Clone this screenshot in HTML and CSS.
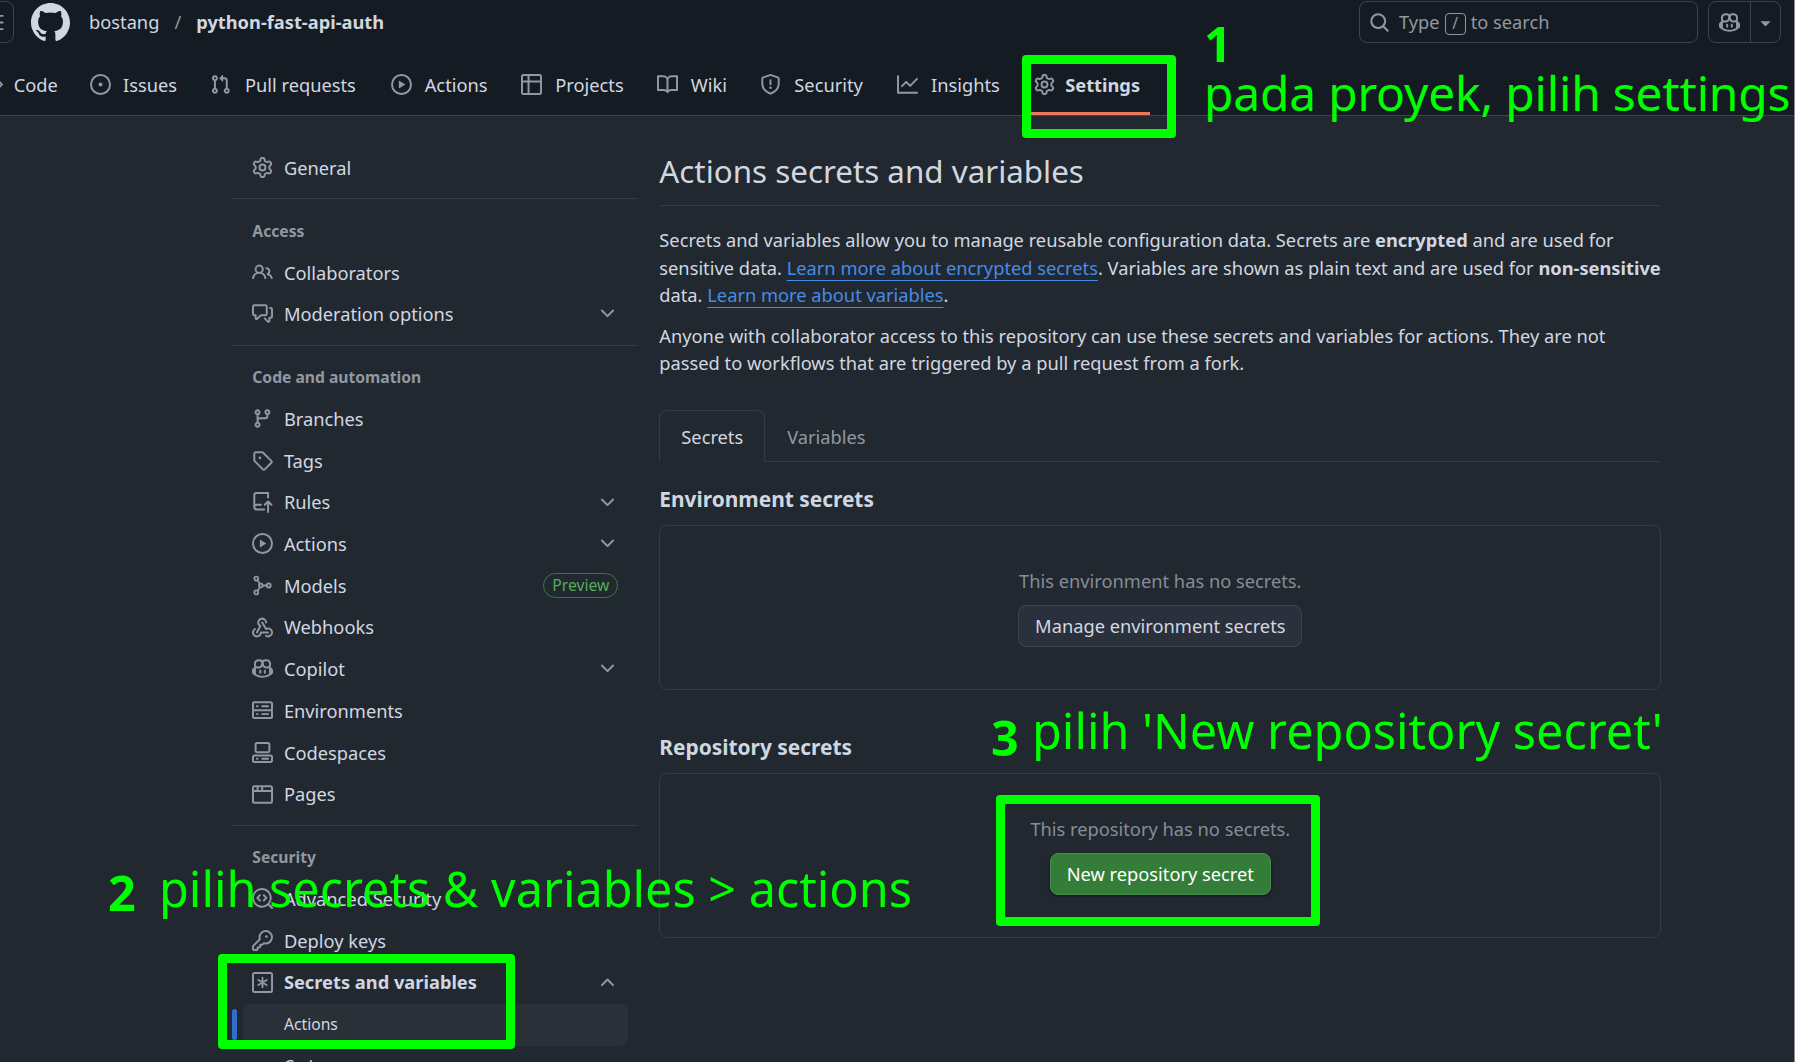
FILE: index.html
```
<!DOCTYPE html>
<html lang="en">
<head>
<meta charset="utf-8">
<title>Actions secrets and variables</title>
<link rel="stylesheet" href="styles.css">
</head>
<body>
<svg class="sprite" aria-hidden="true">
  <symbol id="gear" viewBox="0 0 16 16"><path d="M8 0a8.2 8.2 0 0 1 .701.031C9.444.095 9.99.645 10.16 1.29l.288 1.107c.018.066.079.158.212.224.231.114.454.243.668.386.123.082.233.09.299.071l1.103-.303c.644-.176 1.392.021 1.82.63.27.385.506.792.704 1.218.315.675.111 1.422-.364 1.891l-.814.806c-.049.048-.098.147-.088.294.016.257.016.515 0 .772-.01.147.038.246.088.294l.814.806c.475.469.679 1.216.364 1.891a7.977 7.977 0 0 1-.704 1.217c-.428.61-1.176.807-1.82.63l-1.102-.302c-.067-.019-.177-.011-.3.071a5.909 5.909 0 0 1-.668.386c-.133.066-.194.158-.211.224l-.29 1.106c-.168.646-.715 1.196-1.458 1.26a8.006 8.006 0 0 1-1.402 0c-.743-.064-1.289-.614-1.458-1.26l-.289-1.106c-.018-.066-.079-.158-.212-.224a5.738 5.738 0 0 1-.668-.386c-.123-.082-.233-.09-.299-.071l-1.103.303c-.644.176-1.392-.021-1.82-.63a8.12 8.12 0 0 1-.704-1.218c-.315-.675-.111-1.422.363-1.891l.815-.806c.05-.048.098-.147.088-.294a6.214 6.214 0 0 1 0-.772c.01-.147-.038-.246-.088-.294l-.815-.806C.635 6.045.431 5.298.746 4.623a7.92 7.92 0 0 1 .704-1.217c.428-.61 1.176-.807 1.82-.63l1.102.302c.067.019.177.011.3-.071.214-.143.437-.272.668-.386.133-.066.194-.158.211-.224l.29-1.106C6.009.645 6.556.095 7.299.03 7.53.01 7.764 0 8 0Zm-.571 1.525c-.036.003-.108.036-.137.146l-.289 1.105c-.147.561-.549.967-.998 1.189-.173.086-.34.183-.5.29-.417.278-.97.423-1.529.27l-1.103-.303c-.109-.03-.175.016-.195.045-.22.312-.412.644-.573.99-.014.031-.021.11.059.19l.815.806c.411.406.562.957.53 1.456a4.709 4.709 0 0 0 0 .582c.032.499-.119 1.05-.53 1.456l-.815.806c-.081.08-.073.159-.059.19.162.346.353.677.573.989.02.03.085.076.195.046l1.102-.303c.56-.153 1.113-.008 1.53.27.161.107.328.204.501.29.447.222.85.629.997 1.189l.289 1.105c.029.109.101.143.137.146a6.6 6.6 0 0 0 1.142 0c.036-.003.108-.036.137-.146l.289-1.105c.147-.561.549-.967.998-1.189.173-.086.34-.183.5-.29.417-.278.97-.423 1.529-.27l1.103.303c.109.029.175-.016.195-.045.22-.313.411-.644.573-.99.014-.031.021-.11-.059-.19l-.815-.806c-.411-.406-.562-.957-.53-1.456a4.709 4.709 0 0 0 0-.582c-.032-.499.119-1.05.53-1.456l.815-.806c.081-.08.073-.159.059-.19a6.464 6.464 0 0 0-.573-.989c-.02-.03-.085-.076-.195-.046l-1.102.303c-.56.153-1.113.008-1.53-.27a4.44 4.44 0 0 0-.501-.29c-.447-.222-.85-.629-.997-1.189l-.289-1.105c-.029-.11-.101-.143-.137-.146a6.6 6.6 0 0 0-1.142 0ZM11 8a3 3 0 1 1-6 0 3 3 0 0 1 6 0ZM9.5 8a1.5 1.5 0 1 0-3.001.001A1.5 1.5 0 0 0 9.5 8Z"/></symbol>
  <symbol id="people" viewBox="0 0 16 16"><path d="M2 5.5a3.5 3.5 0 1 1 5.898 2.549 5.508 5.508 0 0 1 3.034 4.084.75.75 0 1 1-1.482.235 4 4 0 0 0-7.9 0 .75.75 0 0 1-1.482-.236A5.507 5.507 0 0 1 3.102 8.05 3.493 3.493 0 0 1 2 5.5ZM11 4a3.001 3.001 0 0 1 2.22 5.018 5.01 5.01 0 0 1 2.56 3.012.749.749 0 0 1-.885.954.752.752 0 0 1-.549-.514 3.507 3.507 0 0 0-2.522-2.372.75.75 0 0 1-.574-.73v-.352a.75.75 0 0 1 .416-.672A1.5 1.5 0 0 0 11 5.5.75.75 0 0 1 11 4Zm-5.5-.5a2 2 0 1 0-.001 3.999A2 2 0 0 0 5.5 3.5Z"/></symbol>
  <symbol id="discuss" viewBox="0 0 16 16"><path d="M1.75 1h8.5c.966 0 1.75.784 1.75 1.75v5.5A1.75 1.75 0 0 1 10.25 10H7.061l-2.574 2.573A1.458 1.458 0 0 1 2 11.543V10h-.25A1.75 1.75 0 0 1 0 8.25v-5.5C0 1.784.784 1 1.75 1ZM1.5 2.75v5.5c0 .138.112.25.25.25h1a.75.75 0 0 1 .75.75v2.19l2.72-2.72a.749.749 0 0 1 .53-.22h3.5a.25.25 0 0 0 .25-.25v-5.5a.25.25 0 0 0-.25-.25h-8.5a.25.25 0 0 0-.25.25Zm13 2a.25.25 0 0 0-.25-.25h-.5a.75.75 0 0 1 0-1.5h.5c.966 0 1.75.784 1.75 1.75v5.5A1.75 1.75 0 0 1 14.25 12H14v1.543a1.458 1.458 0 0 1-2.487 1.03L9.22 12.28a.749.749 0 1 1 1.06-1.06l2.22 2.22v-2.19a.75.75 0 0 1 .75-.75h1a.25.25 0 0 0 .25-.25Z"/></symbol>
  <symbol id="branch" viewBox="0 0 16 16"><path d="M9.5 3.25a2.25 2.25 0 1 1 3 2.122V6A2.5 2.5 0 0 1 10 8.5H6a1 1 0 0 0-1 1v1.128a2.251 2.251 0 1 1-1.5 0V5.372a2.25 2.25 0 1 1 1.5 0v1.836A2.493 2.493 0 0 1 6 7h4a1 1 0 0 0 1-1v-.628A2.25 2.25 0 0 1 9.5 3.25Zm-6 0a.75.75 0 1 0 1.5 0 .75.75 0 0 0-1.5 0Zm8.25-.75a.75.75 0 1 0 0 1.5.75.75 0 0 0 0-1.5ZM4.25 12a.75.75 0 1 0 0 1.5.75.75 0 0 0 0-1.5Z"/></symbol>
  <symbol id="tag" viewBox="0 0 16 16"><path d="M1 7.775V2.75C1 1.784 1.784 1 2.75 1h5.025c.464 0 .91.184 1.238.513l6.25 6.25a1.75 1.75 0 0 1 0 2.474l-5.026 5.026a1.75 1.75 0 0 1-2.474 0l-6.25-6.25A1.752 1.752 0 0 1 1 7.775Zm1.5 0c0 .066.026.13.073.177l6.25 6.25a.25.25 0 0 0 .354 0l5.025-5.025a.25.25 0 0 0 0-.354l-6.25-6.25a.25.25 0 0 0-.177-.073H2.75a.25.25 0 0 0-.25.25ZM6 5a1 1 0 1 1 0 2 1 1 0 0 1 0-2Z"/></symbol>
  <symbol id="rules" viewBox="0 0 16 16"><path d="M1 2.5A2.5 2.5 0 0 1 3.5 0h8.75a.75.75 0 0 1 .75.75v3.5a.75.75 0 0 1-1.5 0V1.5h-8a1 1 0 0 0-1 1v6.708A2.493 2.493 0 0 1 3.5 9h3.25a.75.75 0 0 1 0 1.5H3.5a1 1 0 0 0 0 2h5.75a.75.75 0 0 1 0 1.500H3.500A2.500 2.500 0 0 1 1 11.500Zm13.230 7.790-1.230-1.224v6.184a.75.75 0 0 1-1.500 0V9.066L10.270 10.290a.75.75 0 0 1-1.060-1.060l2.505-2.504a.75.75 0 0 1 1.060 0l2.515 2.500a.75.75 0 0 1-1.060 1.064Z"/></symbol>
  <symbol id="play" viewBox="0 0 16 16"><path d="M8 0a8 8 0 1 1 0 16A8 8 0 0 1 8 0ZM1.500 8a6.500 6.500 0 1 0 13 0 6.500 6.500 0 0 0-13 0Zm4.879-2.773 4.264 2.559a.25.25 0 0 1 0 .428l-4.264 2.559A.25.25 0 0 1 6 10.559V5.442a.25.25 0 0 1 .379-.215Z"/></symbol>
  <symbol id="models" viewBox="0 0 16 16"><g class="line"><circle cx="3.250" cy="2.750" r="1.500"/><circle cx="3.250" cy="13.250" r="1.500"/><circle cx="6.750" cy="8" r="1.400"/><circle cx="12.750" cy="8" r="1.500"/><path d="M4.200 4 6 6.700M4.200 12 6 9.300M8.200 8h3"/></g></symbol>
  <symbol id="webhook" viewBox="0 0 16 16"><path d="M5.500 4.250a2.250 2.250 0 0 1 4.500 0 .75.75 0 0 0 1.500 0 3.750 3.750 0 1 0-6.140 2.889l-2.272 4.258a.75.75 0 0 0 1.324.706L7 7.250a.75.75 0 0 0-.309-1.015A2.250 2.250 0 0 1 5.500 4.250Z"/><path d="M7.364 3.607a.75.75 0 0 1 1.030.257l2.608 4.349a3.750 3.750 0 1 1-.628 6.785.75.75 0 0 1 .752-1.299 2.250 2.250 0 1 0-.033-3.880.75.75 0 0 1-1.030-.256L7.107 4.636a.75.75 0 0 1 .257-1.029Z"/><path d="M2.900 8.776A.75.75 0 0 1 2.625 9.800 2.250 2.250 0 1 0 6 11.750a.75.75 0 0 1 .75-.751h5.500a.75.75 0 0 1 0 1.500H7.425a3.751 3.751 0 1 1-5.550-3.998.75.75 0 0 1 1.025.275Z"/></symbol>
  <symbol id="copilot" viewBox="0 0 16 16"><path d="M7.998 15.035c-4.562 0-7.873-2.914-7.998-3.749V9.338c.085-.628.677-1.686 1.588-2.065.013-.07.024-.143.036-.218.029-.183.060-.384.126-.612-.201-.508-.254-1.084-.254-1.656 0-.870.128-1.769.693-2.484.579-.733 1.494-1.124 2.724-1.261 1.206-.134 2.262.034 2.944.765.050.053.096.108.139.165.044-.057.094-.112.143-.165.682-.731 1.738-.899 2.944-.765 1.230.137 2.145.528 2.724 1.261.566.715.693 1.614.693 2.484 0 .572-.053 1.148-.254 1.656.066.228.098.429.126.612.012.076.024.148.037.218.924.385 1.522 1.471 1.591 2.095v1.872c0 .766-3.351 3.795-8.002 3.795Zm0-1.485c2.280 0 4.584-1.110 5.002-1.433V7.862l-.023-.116c-.490.210-1.075.291-1.727.291-1.146 0-2.059-.327-2.710-.991A3.222 3.222 0 0 1 8 6.303a3.240 3.240 0 0 1-.544.743c-.650.664-1.563.991-2.710.991-.652 0-1.236-.081-1.727-.291l-.023.116v4.255c.419.323 2.722 1.433 5.002 1.433ZM6.762 2.830c-.193-.206-.637-.413-1.682-.297-1.019.113-1.479.404-1.713.700-.247.312-.369.789-.369 1.554 0 .793.129 1.171.308 1.371.162.181.519.379 1.442.379.853 0 1.339-.235 1.638-.540.315-.322.527-.827.617-1.553.117-.935-.037-1.395-.241-1.614Zm4.155-.297c-1.044-.116-1.488.091-1.681.297-.204.219-.359.679-.242 1.614.091.726.303 1.231.618 1.553.299.305.784.540 1.638.540.922 0 1.280-.198 1.442-.379.179-.200.308-.578.308-1.371 0-.765-.123-1.242-.370-1.554-.233-.296-.693-.587-1.713-.700Z"/><path d="M6.250 9.037a.75.75 0 0 1 .75.75v1.501a.75.75 0 0 1-1.500 0V9.787a.75.75 0 0 1 .75-.75Zm4.250.75v1.501a.75.75 0 0 1-1.500 0V9.787a.75.75 0 0 1 1.500 0Z"/></symbol>
  <symbol id="server" viewBox="0 0 16 16"><path d="M1.750 1h12.500c.966 0 1.750.784 1.750 1.750v4c0 .372-.116.717-.314 1 .198.283.314.628.314 1v4a1.750 1.750 0 0 1-1.750 1.750H1.750A1.750 1.750 0 0 1 0 12.750v-4c0-.358.109-.707.314-1a1.739 1.739 0 0 1-.314-1v-4C0 1.784.784 1 1.750 1ZM1.500 2.750v4c0 .138.112.250.250.250h12.500a.250.250 0 0 0 .250-.250v-4a.250.250 0 0 0-.250-.250H1.750a.250.250 0 0 0-.250.250Zm.250 5.750a.250.250 0 0 0-.250.250v4c0 .138.112.250.250.250h12.500a.250.250 0 0 0 .250-.250v-4a.250.250 0 0 0-.250-.250ZM7 4.750A.75.75 0 0 1 7.750 4h4.500a.75.75 0 0 1 0 1.500h-4.500A.75.75 0 0 1 7 4.750ZM7.750 10h4.500a.75.75 0 0 1 0 1.500h-4.500a.75.75 0 0 1 0-1.500ZM3 4.750A.75.75 0 0 1 3.750 4h.5a.75.75 0 0 1 0 1.500h-.5A.75.75 0 0 1 3 4.750ZM3.750 10h.5a.75.75 0 0 1 0 1.500h-.5a.75.75 0 0 1 0-1.500Z"/></symbol>
  <symbol id="codespaces" viewBox="0 0 16 16"><path d="M0 11.250c0-.966.784-1.750 1.750-1.750h12.500c.966 0 1.750.784 1.750 1.750v3A1.750 1.750 0 0 1 14.250 16H1.750A1.750 1.750 0 0 1 0 14.250Zm2-9.500C2 .784 2.784 0 3.750 0h8.500C13.216 0 14 .784 14 1.750v5a1.750 1.750 0 0 1-1.750 1.750h-8.500A1.750 1.750 0 0 1 2 6.750Zm1.750-.250a.250.250 0 0 0-.250.250v5c0 .138.112.250.250.250h8.500a.250.250 0 0 0 .250-.250v-5a.250.250 0 0 0-.250-.250Zm-2 9.500a.250.250 0 0 0-.250.250v3c0 .138.112.250.250.250h12.500a.250.250 0 0 0 .250-.250v-3a.250.250 0 0 0-.250-.250Z"/><path d="M7 12.750a.75.75 0 0 1 .75-.75h4.500a.75.75 0 0 1 0 1.500h-4.500a.75.75 0 0 1-.75-.75Zm-4 0a.75.75 0 0 1 .75-.75h.5a.75.75 0 0 1 0 1.500h-.5a.75.75 0 0 1-.75-.75Z"/></symbol>
  <symbol id="browser" viewBox="0 0 16 16"><path d="M0 2.750C0 1.784.784 1 1.750 1h12.500c.966 0 1.750.784 1.750 1.750v10.500A1.750 1.750 0 0 1 14.250 15H1.750A1.750 1.750 0 0 1 0 13.250ZM14.500 6h-13v7.250c0 .138.112.250.250.250h12.500a.250.250 0 0 0 .250-.250Zm-6-3.500v2h6V2.750a.250.250 0 0 0-.250-.250ZM5 2.500v2h2v-2Zm-3.250 0a.250.250 0 0 0-.250.250V4.500h2v-2Z"/></symbol>
  <symbol id="codescan" viewBox="0 0 16 16"><path d="M8.470 4.970a.75.75 0 0 0 0 1.060L9.940 7.500 8.470 8.970a.75.75 0 1 0 1.060 1.060l2-2a.75.75 0 0 0 0-1.060l-2-2a.75.75 0 0 0-1.060 0ZM6.530 6.030a.75.75 0 0 0-1.060-1.060l-2 2a.75.75 0 0 0 0 1.060l2 2a.75.75 0 1 0 1.060-1.060L5.060 7.500Z"/><path d="M12.246 13.307a7.500 7.500 0 1 1 1.060-1.060l2.474 2.473a.75.75 0 1 1-1.060 1.060ZM1.500 7.500a6.002 6.002 0 0 0 3.608 5.504 6.002 6.002 0 0 0 6.486-1.117.750.750 0 0 1 .292-.293A6 6 0 1 0 1.500 7.500Z"/></symbol>
  <symbol id="key" viewBox="0 0 16 16"><path d="M10.500 0a5.499 5.499 0 1 1-1.288 10.848l-.932.932a.749.749 0 0 1-.530.220H7v.750a.749.749 0 0 1-.220.530l-.5.500a.749.749 0 0 1-.530.220H5v.750a.749.749 0 0 1-.220.530l-.5.500a.749.749 0 0 1-.530.220h-2A1.750 1.750 0 0 1 0 14.250v-2c0-.199.079-.389.220-.530l4.932-4.932A5.500 5.500 0 0 1 10.500 0Zm-4 5.500c-.001.431.069.860.205 1.269a.75.75 0 0 1-.181.768L1.500 12.560v1.690c0 .138.112.250.250.250h1.690l.060-.060v-1.190a.75.75 0 0 1 .75-.75h1.190l.060-.060v-1.190a.75.75 0 0 1 .75-.75h1.190l1.023-1.025a.75.75 0 0 1 .768-.180A4 4 0 1 0 6.500 5.500ZM11 6a1 1 0 1 1 0-2 1 1 0 0 1 0 2Z"/></symbol>
  <symbol id="asterisk" viewBox="0 0 16 16"><path d="M1.750 0h12.500C15.216 0 16 .784 16 1.750v12.500A1.750 1.750 0 0 1 14.250 16H1.750A1.750 1.750 0 0 1 0 14.250V1.750C0 .784.784 0 1.750 0ZM1.500 1.750v12.500c0 .138.112.250.250.250h12.500a.250.250 0 0 0 .250-.250V1.750a.250.250 0 0 0-.250-.250H1.750a.250.250 0 0 0-.250.250Z"/><path class="line" d="M8 4.300v7.400M4.800 6.150l6.400 3.700M11.200 6.150 4.800 9.850"/></symbol>
  <symbol id="issue" viewBox="0 0 16 16"><path d="M8 9.500a1.500 1.500 0 1 0 0-3 1.500 1.500 0 0 0 0 3Z"/><path d="M8 0a8 8 0 1 1 0 16A8 8 0 0 1 8 0ZM1.500 8a6.500 6.500 0 1 0 13 0 6.500 6.500 0 0 0-13 0Z"/></symbol>
  <symbol id="pull" viewBox="0 0 16 16"><path d="M1.500 3.250a2.250 2.250 0 1 1 3 2.122v5.256a2.251 2.251 0 1 1-1.500 0V5.372A2.250 2.250 0 0 1 1.500 3.250Zm5.677-.177L9.573.677A.250.250 0 0 1 10 .854V2.500h1A2.500 2.500 0 0 1 13.500 5v5.628a2.251 2.251 0 1 1-1.500 0V5a1 1 0 0 0-1-1h-1v1.646a.250.250 0 0 1-.427.177L7.177 3.427a.250.250 0 0 1 0-.354ZM3.750 2.500a.75.75 0 1 0 0 1.500.75.75 0 0 0 0-1.500Zm0 9.500a.75.75 0 1 0 0 1.500.75.75 0 0 0 0-1.500Zm8.250.750a.75.75 0 1 0 1.500 0 .75.75 0 0 0-1.500 0Z"/></symbol>
  <symbol id="table" viewBox="0 0 16 16"><path d="M0 1.750C0 .784.784 0 1.750 0h12.500C15.216 0 16 .784 16 1.750v12.500A1.750 1.750 0 0 1 14.250 16H1.750A1.750 1.750 0 0 1 0 14.250ZM6.500 6.500v8h7.750a.250.250 0 0 0 .250-.250V6.500Zm8-1.500V1.750a.250.250 0 0 0-.250-.250H6.500V5Zm-13 1.500v7.750c0 .138.112.250.250.250H5v-8ZM5 5V1.500H1.750a.250.250 0 0 0-.250.250V5Z"/></symbol>
  <symbol id="book" viewBox="0 0 16 16"><path d="M0 1.750A.75.75 0 0 1 .750 1h4.253c1.227 0 2.317.590 3 1.501A3.743 3.743 0 0 1 11.006 1h4.245a.75.75 0 0 1 .75.75v10.500a.75.75 0 0 1-.75.75h-4.507a2.250 2.250 0 0 0-1.591.659l-.622.621a.75.75 0 0 1-1.060 0l-.622-.621A2.250 2.250 0 0 0 5.258 13H.750a.75.75 0 0 1-.75-.75Zm7.251 10.324.004-5.073-.002-2.253A2.250 2.250 0 0 0 5.003 2.500H1.500v9h3.757a3.750 3.750 0 0 1 1.994.574ZM8.755 4.750l-.004 7.322a3.752 3.752 0 0 1 1.992-.572H14.500v-9h-3.495a2.250 2.250 0 0 0-2.250 2.250Z"/></symbol>
  <symbol id="shield" viewBox="0 0 16 16"><path d="M7.467.133a1.748 1.748 0 0 1 1.066 0l5.250 1.680A1.750 1.750 0 0 1 15 3.480V7c0 1.566-.320 3.182-1.303 4.682-.983 1.498-2.585 2.813-5.032 3.855a1.697 1.697 0 0 1-1.330 0c-2.447-1.042-4.049-2.357-5.032-3.855C1.320 10.182 1 8.566 1 7V3.480a1.755 1.755 0 0 1 1.217-1.667Zm.610 1.429a.250.250 0 0 0-.153 0l-5.250 1.680a.250.250 0 0 0-.174.238V7c0 1.358.275 2.666 1.057 3.860.784 1.194 2.121 2.340 4.366 3.297a.196.196 0 0 0 .154 0c2.245-.956 3.582-2.104 4.366-3.298C13.225 9.666 13.500 8.360 13.500 7V3.480a.251.251 0 0 0-.174-.237l-5.250-1.680ZM8.750 4.750v3a.75.75 0 0 1-1.500 0v-3a.75.75 0 0 1 1.500 0ZM9 10.500a1 1 0 1 1-2 0 1 1 0 0 1 2 0Z"/></symbol>
  <symbol id="graph" viewBox="0 0 16 16"><path d="M1.500 1.750V13.500h13.750a.75.75 0 0 1 0 1.500H.750a.75.75 0 0 1-.75-.75V1.750a.75.75 0 0 1 1.500 0Zm14.280 2.530-5.250 5.250a.75.75 0 0 1-1.060 0L7 7.060 4.280 9.780a.751.751 0 0 1-1.060-1.060l3.250-3.250a.75.75 0 0 1 1.060 0L10 7.940l4.720-4.720a.751.751 0 0 1 1.060 1.060Z"/></symbol>
  <symbol id="search" viewBox="0 0 16 16"><path d="M10.680 11.740a6 6 0 0 1-7.922-8.982 6 6 0 0 1 8.982 7.922l3.040 3.040a.749.749 0 1 1-1.060 1.060ZM11.500 7a4.499 4.499 0 1 0-8.997 0A4.499 4.499 0 0 0 11.500 7Z"/></symbol>
  <symbol id="down" viewBox="0 0 16 16"><path d="M12.780 5.220a.749.749 0 0 1 0 1.060l-4.250 4.250a.749.749 0 0 1-1.060 0L3.220 6.280a.749.749 0 1 1 1.060-1.060L8 8.939l3.720-3.719a.749.749 0 0 1 1.060 0Z"/></symbol>
  <symbol id="up" viewBox="0 0 16 16"><path d="M3.220 10.530a.749.749 0 0 1 0-1.060l4.250-4.250a.749.749 0 0 1 1.060 0l4.250 4.250a.749.749 0 1 1-1.060 1.060L8 6.811 4.280 10.530a.749.749 0 0 1-1.060 0Z"/></symbol>
  <symbol id="triangle" viewBox="0 0 16 16"><path d="m4.427 7.427 3.396 3.396a.250.250 0 0 0 .354 0l3.396-3.396A.250.250 0 0 0 11.396 7H4.604a.250.250 0 0 0-.177.427Z"/></symbol>
  <symbol id="menu" viewBox="0 0 16 16"><path class="line" d="M1 3h14M1 8h14M1 13h14"/></symbol>
  <symbol id="code" viewBox="0 0 16 16"><path class="line" d="m5 3.500-4.200 4.500L5 12.500M11 3.500l4.200 4.500-4.200 4.500"/></symbol>
  <symbol id="mark" viewBox="0 0 16 16"><path d="M8 0c4.420 0 8 3.580 8 8a8.013 8.013 0 0 1-5.450 7.590c-.400.080-.550-.170-.550-.380 0-.270.010-1.130.010-2.200 0-.750-.250-1.230-.540-1.480 1.780-.200 3.650-.880 3.650-3.950 0-.880-.310-1.590-.820-2.150.080-.200.360-1.020-.080-2.120 0 0-.670-.220-2.200.820-.640-.180-1.320-.270-2-.270-.680 0-1.360.090-2 .270-1.530-1.030-2.200-.820-2.200-.820-.440 1.100-.160 1.920-.080 2.120-.510.560-.820 1.280-.820 2.150 0 3.060 1.860 3.750 3.640 3.950-.230.200-.440.550-.510 1.070-.460.210-1.610.550-2.330-.660-.150-.240-.600-.830-1.230-.820-.670.010-.270.380.010.530.340.190.730.900.820 1.130.160.450.680 1.310 2.690.940 0 .670.010 1.300.010 1.490 0 .210-.150.450-.550.380A7.995 7.995 0 0 1 0 8c0-4.420 3.580-8 8-8Z"/></symbol>
</svg>

<header class="header">
  <div class="topbar">
    <button class="square"><svg class="icon"><use href="#menu"/></svg></button>
    <svg class="logo"><use href="#mark"/></svg>
    <nav class="crumbs"><span>bostang</span><span class="slash">/</span><strong>python-fast-api-auth</strong></nav>
    <div class="search"><svg class="icon"><use href="#search"/></svg><span>Type</span><kbd>/</kbd><span>to search</span></div>
    <div class="assist"><span class="assist-main"><svg class="icon"><use href="#copilot"/></svg></span><span class="assist-more"><svg class="icon"><use href="#triangle"/></svg></span></div>
  </div>
  <nav class="tabs">
    <a class="tab"><svg class="icon"><use href="#code"/></svg><span class="tab-text" data-content="Code">Code</span></a>
    <a class="tab"><svg class="icon"><use href="#issue"/></svg><span class="tab-text" data-content="Issues">Issues</span></a>
    <a class="tab"><svg class="icon"><use href="#pull"/></svg><span class="tab-text" data-content="Pull requests">Pull requests</span></a>
    <a class="tab"><svg class="icon"><use href="#play"/></svg><span class="tab-text" data-content="Actions">Actions</span></a>
    <a class="tab"><svg class="icon"><use href="#table"/></svg><span class="tab-text" data-content="Projects">Projects</span></a>
    <a class="tab"><svg class="icon"><use href="#book"/></svg><span class="tab-text" data-content="Wiki">Wiki</span></a>
    <a class="tab"><svg class="icon"><use href="#shield"/></svg><span class="tab-text" data-content="Security">Security</span></a>
    <a class="tab"><svg class="icon"><use href="#graph"/></svg><span class="tab-text" data-content="Insights">Insights</span></a>
    <a class="tab tab-active"><svg class="icon"><use href="#gear"/></svg><span class="tab-text" data-content="Settings">Settings</span></a>
  </nav>
</header>

<div class="layout">
  <aside class="side">
    <a class="item"><svg class="icon"><use href="#gear"/></svg>General</a>
    <hr class="rule">
    <h3 class="group">Access</h3>
    <a class="item"><svg class="icon"><use href="#people"/></svg>Collaborators</a>
    <a class="item"><svg class="icon"><use href="#discuss"/></svg>Moderation options<svg class="icon chevron"><use href="#down"/></svg></a>
    <hr class="rule">
    <h3 class="group">Code and automation</h3>
    <a class="item"><svg class="icon"><use href="#branch"/></svg>Branches</a>
    <a class="item"><svg class="icon"><use href="#tag"/></svg>Tags</a>
    <a class="item"><svg class="icon"><use href="#rules"/></svg>Rules<svg class="icon chevron"><use href="#down"/></svg></a>
    <a class="item"><svg class="icon"><use href="#play"/></svg>Actions<svg class="icon chevron"><use href="#down"/></svg></a>
    <a class="item"><svg class="icon"><use href="#models"/></svg>Models<span class="label">Preview</span></a>
    <a class="item"><svg class="icon"><use href="#webhook"/></svg>Webhooks</a>
    <a class="item"><svg class="icon"><use href="#copilot"/></svg>Copilot<svg class="icon chevron"><use href="#down"/></svg></a>
    <a class="item"><svg class="icon"><use href="#server"/></svg>Environments</a>
    <a class="item"><svg class="icon"><use href="#codespaces"/></svg>Codespaces</a>
    <a class="item"><svg class="icon"><use href="#browser"/></svg>Pages</a>
    <hr class="rule">
    <h3 class="group">Security</h3>
    <a class="item"><svg class="icon"><use href="#codescan"/></svg>Advanced Security</a>
    <a class="item"><svg class="icon"><use href="#key"/></svg>Deploy keys</a>
    <a class="item item-bold"><svg class="icon"><use href="#asterisk"/></svg>Secrets and variables<svg class="icon chevron"><use href="#up"/></svg></a>
    <a class="sub sub-active">Actions</a>
    <a class="sub">Codespaces</a>
  </aside>

  <main class="main">
    <h1 class="title">Actions secrets and variables</h1>
    <p class="text">Secrets and variables allow you to manage reusable configuration data. Secrets are <strong>encrypted</strong> and are used for<br>sensitive data. <a class="link">Learn more about encrypted secrets</a>. Variables are shown as plain text and are used for <strong>non-sensitive</strong><br>data. <a class="link">Learn more about variables</a>.</p>
    <p class="text">Anyone with collaborator access to this repository can use these secrets and variables for actions. They are not<br>passed to workflows that are triggered by a pull request from a fork.</p>
    <div class="subtabs"><span class="subtab subtab-active">Secrets</span><span class="subtab">Variables</span></div>
    <h2 class="heading">Environment secrets</h2>
    <section class="box"><p class="empty">This environment has no secrets.</p><button class="btn">Manage environment secrets</button></section>
    <h2 class="heading heading-second">Repository secrets</h2>
    <section class="box"><p class="empty">This repository has no secrets.</p><button class="btn btn-primary">New repository secret</button></section>
  </main>
</div>

<div class="edge"></div>
<div class="frame frame-settings"></div>
<div class="frame frame-secrets"></div>
<div class="frame frame-new"></div>
<div class="note num num-1">1</div>
<div class="note note-1">pada proyek, pilih settings</div>
<div class="note num num-2">2</div>
<div class="note note-2">pilih secrets &amp; variables &gt; actions</div>
<div class="note num num-3">3</div>
<div class="note note-3">pilih 'New repository secret'</div>
</body>
</html>
```
FILE: styles.css
```
* { box-sizing: border-box; }
body {
  position: relative;
  width: 1798px;
  height: 1062px;
  margin: 0;
  overflow: hidden;
  background: #212830;
  color: #d1d7e0;
  font-family: "Noto Sans", sans-serif;
  font-size: 18.28px;
  line-height: 27.4px;
}
h1, h2, h3, p { margin: 0; }
button { font: inherit; }
.sprite { position: absolute; width: 0; height: 0; }
.icon { flex: none; width: 21px; height: 21px; fill: #9198a1; color: #9198a1; }
.line { fill: none; stroke: #9198a1; stroke-width: 1.4; stroke-linecap: round; }

.header { height: 116px; background: #151b23; border-bottom: 1px solid #3d444d; }
.topbar { display: flex; align-items: center; height: 49px; padding: 0 17px 5px 0; }
.square { display: flex; flex: none; align-items: center; justify-content: center; width: 42px; height: 42px; margin-left: -28px; padding: 0; border: 1px solid #3d444d; border-radius: 8px; background: none; }
.logo { flex: none; width: 39px; height: 39px; margin-left: 17px; margin-top: 1px; fill: #d1d7e0; }
.crumbs { display: flex; gap: 15px; margin-left: 19px; }
.slash { color: #9198a1; }
.crumbs strong { font-weight: 700; }
.search { display: flex; align-items: center; width: 339px; height: 42px; margin-left: auto; padding-left: 9px; border: 1px solid #3d444d; border-radius: 8px; color: #9198a1; }
.search .icon { margin-right: 9px; }
.search kbd { width: 21px; height: 22px; margin: 3px 5px 0; border: 1px solid #9198a1; border-radius: 4px; font-family: inherit; font-size: 15.5px; line-height: 18px; text-align: center; }
.assist { display: flex; width: 73px; height: 42px; margin-left: 10px; border: 1px solid #3d444d; border-radius: 8px; }
.assist span { display: grid; place-items: center; }
.assist-main { width: 42px; border-right: 1px solid #3d444d; }
.assist-more { flex: 1; }

.tabs { display: flex; gap: 10.4px; height: 66px; margin-left: -28.9px; padding-top: 14.6px; }
.tab { display: flex; flex: none; align-items: center; gap: 10.5px; height: 42px; padding: 0 10.4px; }
.tab-text { text-align: center; }
/* reserve the bold width so that selecting a tab does not shift its neighbours */
.tab-text::before { content: attr(data-content); display: block; height: 0; visibility: hidden; font-weight: 700; }
.tab-active { height: 51.4px; padding-bottom: 9.4px; box-shadow: inset 0 -3px 0 #ec775c; font-weight: 700; }

.layout { display: flex; align-items: flex-start; height: 946px; padding-left: 232.3px; overflow: hidden; }
.side { flex: none; width: 406px; padding-top: 30.8px; }
.item { display: flex; align-items: center; gap: 10.6px; height: 41.73px; padding: 0 20px; }
.item-bold { font-weight: 700; }
.chevron { margin-left: auto; }
.rule { height: 1px; margin: 9.8px 0 10.4px; border: 0; background: #343b44; }
.group { height: 41.7px; padding-left: 20px; color: #9198a1; font-size: 15.67px; font-weight: 700; line-height: 42px; }
.label { margin-left: auto; padding: 0 8px; border: 1px solid #347d39; border-radius: 14px; color: #57ab5a; font-size: 15.67px; line-height: 23.5px; }
.sub { position: relative; display: flex; align-items: center; height: 41.76px; margin: 0 10.4px; padding-left: 41.3px; border-radius: 8px; font-size: 15.67px; }
.sub-active { margin-top: 1px; background: #2a3038; }
.sub-active::before { content: ""; position: absolute; left: -10.4px; top: 5px; width: 5px; height: 31px; border-radius: 5px; background: #316dca; }

.main { width: 1002px; margin-left: 21px; padding-top: 32px; }
.title { height: 58px; margin-bottom: 20.4px; border-bottom: 1px solid #343b44; font-size: 31.33px; font-weight: 400; line-height: 47px; }
.text { margin-bottom: 13px; white-space: nowrap; }
.text strong { font-weight: 700; }
.link { color: #478be6; text-decoration: underline; text-decoration-thickness: 1px; text-underline-offset: 5px; }
.subtabs { display: flex; height: 52px; margin-top: 33.3px; border-bottom: 1px solid #343b44; }
.subtab { height: 52px; padding: 0 21px; border: 1px solid transparent; color: #9198a1; line-height: 51px; }
.subtab-active { border-color: #343b44; border-bottom-color: #212830; border-radius: 8px 8px 0 0; background: #212830; color: #d1d7e0; }
.heading { margin: 21.8px 0 10px; font-size: 20.9px; font-weight: 700; line-height: 31px; }
.heading-second { margin-top: 42px; }
.box { display: flex; flex-direction: column; align-items: center; height: 165px; padding-top: 41.3px; border: 1px solid #343b44; border-radius: 8px; }
.empty { margin-bottom: 10.4px; color: #848d97; }
.btn { height: 42px; padding: 0 16px; border: 1px solid #3d444d; border-radius: 8px; background: #2a313c; color: #d1d7e0; }
.btn-primary { border-color: #4a8b4e; background: #347d39; color: #fff; box-shadow: 0 1px 3px #01040980; }

.edge { position: absolute; top: 0; right: 0; width: 4px; height: 1062px; border-left: 1px solid #8b8f94; background: #fff; }

/* tutorial annotations drawn over the page */
.frame { position: absolute; border: 9px solid #0f0; border-radius: 4px; }
.frame-settings { left: 1022px; top: 55px; width: 154px; height: 83px; }
.frame-secrets { left: 218px; top: 954px; width: 297px; height: 95px; }
.frame-new { left: 996px; top: 795px; width: 324px; height: 131px; }
.note { position: absolute; color: #0f0; font-size: 48.56px; line-height: 66px; white-space: nowrap; }
.num { font-weight: 700; }
.num-1 { left: 1204px; top: 10px; }
.note-1 { left: 1204px; top: 60px; font-size: 47.9px; letter-spacing: -0.18px; }
.num-2 { left: 108px; top: 859px; }
.note-2 { left: 159px; top: 855px; }
.num-3 { left: 991px; top: 704px; }
.note-3 { left: 1032px; top: 697px; }
```
